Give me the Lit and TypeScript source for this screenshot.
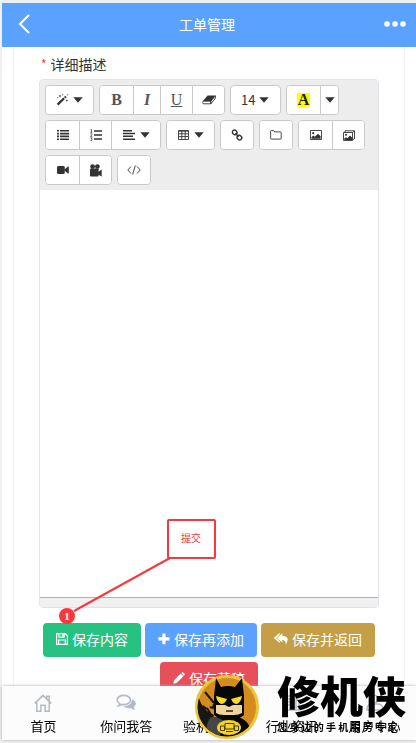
import { LitElement, html, svg, css, type SVGTemplateResult } from "lit";
import { customElement } from "lit/decorators.js";
import { classMap } from "lit/directives/class-map.js";

type Icon = { w: number; h: number; art: SVGTemplateResult };

const icons: Record<string, Icon> = {
  back: { w: 12, h: 20, art: svg`<path d="M11 1 2 10l9 9" fill="none" stroke="currentColor" stroke-width="2"/>` },
  more: { w: 22, h: 6, art: svg`<circle cx="3" cy="3" r="2.8"/><circle cx="11" cy="3" r="2.8"/><circle cx="19" cy="3" r="2.8"/>` },
  caret: { w: 10, h: 6, art: svg`<path d="M.3.3h9.4L5 5.8z"/>` },
  magic: { w: 12, h: 12, art: svg`<path d="M.8 9.8 7.3 3.5l1.6 1.6-6.5 6.4z"/><path d="m8 3 1.3-1.2 1.4 1.4-1.2 1.2z"/><path d="M4 .8v2.4M2.8 2h2.4M6.7 0v1.4M10.8 5.6v2M9.8 6.6h2M1 3.7h1.3M11.4.2v1.2" stroke="currentColor" stroke-width=".7"/>` },
  eraser: { w: 14, h: 10, art: svg`<path d="M5.6.6h8L9 6H1z"/><path d="M1 6.2h7.7v2.6H1.2Q.3 7.6 1 6.2zM8.9 8.8V6.1l4.6-5.3q.7 1.2-.4 2.8z" fill="none" stroke="currentColor" stroke-width=".9"/>` },
  ul: { w: 12, h: 10, art: svg`<path d="M0 0h2v1.6H0zm0 2.8h2v1.6H0zm0 2.8h2v1.6H0zm0 2.8h2V10H0zM3 0h9v1.6H3zm0 2.8h9v1.6H3zm0 2.8h9v1.6H3zm0 2.8h9V10H3z"/>` },
  ol: { w: 12, h: 12, art: svg`<path d="M4 1.2h8v1.5H4zm0 4h8v1.5H4zm0 4h8v1.5H4z"/><path d="M.5.8 1.5.3v3M.3 3.3h2M.4 4.7h1.5v1L.4 7.4h1.9M.4 8.8h1.7L1.2 10q1 0 1 .8t-1.8.7" fill="none" stroke="currentColor" stroke-width=".7"/>` },
  align: { w: 12, h: 10, art: svg`<path d="M0 0h9v1.5H0zm0 2.8h12v1.5H0zm0 2.8h10v1.5H0zm0 2.8h12v1.5H0z"/>` },
  table: { w: 11, h: 10, art: svg`<path d="M.5.5h10v9H.5zM.5 1.2h10M.5 3.8h10M.5 6.6h10M3.8 1v8.5M7.2 1v8.5" fill="none" stroke="currentColor" stroke-width=".9"/>` },
  link: { w: 12, h: 12, art: svg`<g fill="none" stroke="currentColor" stroke-width="1.4"><rect x="1.3" y="1.2" width="4.7" height="4.2" rx="2" transform="rotate(40 3.6 3.4)"/><rect x="6.1" y="6.5" width="4.7" height="4.2" rx="2" transform="rotate(40 8.4 8.6)"/><path d="m4.3 4.3 3.4 3.4"/></g>` },
  folder: { w: 12, h: 10, art: svg`<path d="M.6 8.2V1.4q0-.8.8-.8h2.2q.8 0 .9 1.3h5.8q.9 0 .9.9v5.4q0 .9-.9.9H1.5q-.9 0-.9-.9z" fill="none" stroke="currentColor" stroke-width=".9"/>` },
  picture: { w: 12, h: 10, art: svg`<path d="M.5.5h11v9H.5z" fill="none" stroke="currentColor" stroke-width=".9"/><circle cx="3.2" cy="3.2" r="1.1"/><path d="M1.5 8.8V7l1.8-1.5 1.5 1.2L8 3.8l2.6 2.4v2.6z"/>` },
  pictures: { w: 12, h: 11, art: svg`<path d="M.5 2.5h9v8h-9zM2 2.3V.8h9.5v8L9.8 9.6M9.5 2.6l1.8-1.6" fill="none" stroke="currentColor" stroke-width=".9"/><circle cx="3" cy="4.8" r="1"/><path d="M1.3 10V8.4L3 7.2l1.4 1L7 5.6l2 2V10z"/>` },
  video: { w: 12, h: 8, art: svg`<rect y="0" width="7.8" height="8" rx="1.4"/><path d="M7.5 3.5 11 .6q.8-.4.8.3v6.2q0 .7-.8.3L7.5 4.6z"/>` },
  camera: { w: 12, h: 13, art: svg`<circle cx="2.6" cy="2.6" r="2.4"/><circle cx="7.4" cy="2.6" r="2.4"/><rect y="4.5" width="8.6" height="8" rx=".8"/><path d="M8 8 11.7 5.600v7L8 10.500z"/>` },
  code: { w: 14, h: 10, art: svg`<path d="M4 1.5.8 5 4 8.5M10 1.5 13.2 5 10 8.5M8.3.5 5.7 9.5" fill="none" stroke="currentColor" stroke-width=".9"/>` },
  save: { w: 12, h: 12, art: svg`<path d="M.6.6h8.6l2.2 2.2v8.6H.6zM3 .8v3.4h5.2V.8M2.6 11.2V7h6.8v4.2" fill="none" stroke="currentColor" stroke-width="1.2"/><path d="M6 .8h1.5v2.6H6z"/>` },
  plus: { w: 12, h: 12, art: svg`<path d="M4.3.5h3.2v3.7h4v3.2h-4v3.9H4.3V7.4H.4V4.2h3.9z"/>` },
  reply: { w: 14, h: 12, art: svg`<path d="M8.300 2.800V.2L3 4.900l5.300 4.700V7q3.900 0 3.300 4.800Q17 3.600 8.300 2.800z"/><path d="M5.500.2.1 4.900l5.400 4.700V8.300L1.900 4.900l3.600-3.300z" stroke="currentColor" stroke-width=".5"/>` },
  pencil: { w: 12, h: 12, art: svg`<path d="m8.4.8.9-.5q.6-.2 1.2.4l1 1q.6.7 0 1.3l-.8.8zM7.7 1.5l2.8 2.8L3.6 11l-3.2.7.5-3.3z"/>` },
  home: { w: 18, h: 18, art: svg`<path d="m.8 9.4 8.2-8 8.2 8M2.8 8v9.2h4.1v-6h4.2v6h4.1V8M12.8 4.6V2.2h2.4V7" fill="none" stroke="currentColor" stroke-width="1.5"/>` },
  chat: { w: 20, h: 17, art: svg`<path d="M7.8 1.4c3.7 0 6.7 2 6.7 4.6s-3 4.6-6.7 4.6q-1.1 0-2-.2-1.3 1-3.1 1.2.9-.8 1.1-2Q1.1 8.2 1.1 6c0-2.6 3-4.6 6.7-4.6z" fill="none" stroke="currentColor" stroke-width="1.6"/><path d="M16 5.2c4.7 2 4.9 5.7 1.700 7.800q.3 1.500 1.700 2.700-2.700 0-4.300-1.500-4.900.7-7.600-2Q16 12 16 5.200z"/>` },
  shield: { w: 18, h: 18, art: svg`<path d="M9 1 16 4v5q0 5-7 8-7-3-7-8V4z" fill="none" stroke="currentColor" stroke-width="1.4"/>` },
  news: { w: 18, h: 18, art: svg`<path d="M2 2h11v14H2zM13 6h3v10h-4M5 5h5M5 8h5M5 11h5" fill="none" stroke="currentColor" stroke-width="1.4"/>` },
  user: { w: 18, h: 18, art: svg`<path d="M1 16q0-6 5-6h6q5 0 5 6z" fill="none" stroke="currentColor" stroke-width="1.4"/><circle cx="9" cy="5" r="3.6" fill="none" stroke="currentColor" stroke-width="1.4"/>` },
};

const icon = (name: string) => {
  const i = icons[name];
  return html`<svg class="icon" width=${i.w} height=${i.h} viewBox="0 0 ${i.w} ${i.h}" fill="currentColor" aria-hidden="true">${i.art}</svg>`;
};

@customElement("rich-editor")
class RichEditor extends LitElement {
  static styles = css`
    :host { display: block; position: relative; }
    .label { display: flex; gap: 4px; padding: 7px 2px 5px; font-size: 14px; line-height: 20px; color: #333; }
    .star { color: #e8403c; font-size: 12px; }
    .frame { border: 1px solid #e2e2ec; border-radius: 4px; overflow: hidden; background: #fff; }
    .toolbar { display: flex; flex-wrap: wrap; gap: 5px; padding: 5px; background: #ededed; }
    .group { display: flex; height: 30px; box-sizing: border-box; border: 1px solid #c9c9c9; border-radius: 4px; background: #fff; overflow: hidden; }
    .tool { display: flex; align-items: center; justify-content: center; gap: 5px; width: 32px; padding: 0; border: 0; background: #fff; color: #333; font: 14px "Noto Sans CJK SC", sans-serif; }
    .tool:first-child:not(:last-child) { width: 33px; }
    .tool + .tool { border-left: 1px solid #c9c9c9; }
    .tool.wide { width: 47px; }
    .tool + .tool.wide { width: 49px; }
    .tool.slim { width: 18px; }
    .tool.mid { width: 27px; }
    .letter { font: bold 16px "Liberation Serif", serif; color: #555; }
    .italic { font-style: italic; }
    .under { font-weight: normal; text-decoration: underline; }
    .mark { padding: 0 1px; background: #ff0; color: #222; line-height: 14px; }
    .size { display: grid; grid-template-columns: 49px; align-items: center; color: #333; }
    .size > * { grid-area: 1 / 1; }
    .size .icon { justify-self: end; margin-right: 11px; pointer-events: none; }
    .select { appearance: none; height: 26px; padding: 0 0 0 10px; border: 0; background: none; color: #333; font: 13px "Noto Sans CJK SC", sans-serif; align-self: start; }
    .text { display: block; box-sizing: border-box; width: 100%; height: 407px; padding: 10px; border: 0; outline: 0; resize: none; font: 14px "Noto Sans CJK SC", sans-serif; }
    .status { height: 9px; border-top: 1px solid #b0b0b0; background: #f0f0f0; }
    .note { position: absolute; left: 17px; bottom: -18px; pointer-events: none; }
    .note-text { font: 10px "Noto Sans CJK SC", sans-serif; }
    .note-num { font: bold 11px "Liberation Serif", serif; }
  `;

  private tool(label: string, face: unknown, kind = "") {
    return html`<button type="button" aria-label=${label} class=${classMap({ tool: true, [kind || "plain"]: true })}>${face}</button>`;
  }

  render() {
    const t = this.tool;
    return html`
      <label class="label" for="detail"><span class="star">*</span>详细描述</label>
      <div class="frame">
        <div class="toolbar" role="toolbar" aria-label="格式">
          <div class="group">${t("样式", [icon("magic"), icon("caret")], "wide")}</div>
          <div class="group">
            ${t("粗体", html`<span class="letter">B</span>`)}
            ${t("斜体", html`<span class="letter italic">I</span>`, "mid")}
            ${t("下划线", html`<span class="letter under">U</span>`)}
            ${t("清除格式", icon("eraser"))}
          </div>
          <div class="group size">
            <select class="select" aria-label="字号"><option>12</option><option selected>14</option><option>16</option></select>
            ${icon("caret")}
          </div>
          <div class="group">
            ${t("背景色", html`<span class="letter mark">A</span>`)}
            ${t("更多颜色", icon("caret"), "slim")}
          </div>
          <div class="group">
            ${t("无序列表", icon("ul"))} ${t("有序列表", icon("ol"))}
            ${t("对齐", [icon("align"), icon("caret")], "wide")}
          </div>
          <div class="group">${t("表格", [icon("table"), icon("caret")], "wide")}</div>
          <div class="group">${t("链接", icon("link"))}</div>
          <div class="group">${t("文件", icon("folder"))}</div>
          <div class="group">${t("图片", icon("picture"))} ${t("图库", icon("pictures"))}</div>
          <div class="group">${t("视频", icon("video"))} ${t("上传视频", icon("camera"))}</div>
          <div class="group">${t("源代码", icon("code"))}</div>
        </div>
        <textarea class="text" id="detail"></textarea>
        <div class="status"></div>
      </div>
      <svg class="note" width="162" height="109" viewBox="0 0 162 109" fill="#f9383c">
        <path d="M114 41 18 94" stroke="#f9383c" stroke-width="2" />
        <rect x="112" y="3" width="47" height="38" rx="1" fill="#fff" stroke="#f9383c" stroke-width="2" />
        <text class="note-text" x="135" y="25" text-anchor="middle">提交</text>
        <circle cx="11" cy="99" r="8" />
        <text class="note-num" x="11" y="103" text-anchor="middle" fill="#fff">1</text>
      </svg>
    `;
  }
}

@customElement("brand-mark")
class BrandMark extends LitElement {
  static styles = css`
    :host { display: flex; align-items: flex-end; gap: 17px; color: #000; }
    .badge { display: block; }
    .words { display: flex; flex-direction: column; gap: 4px; padding-bottom: 6px; white-space: nowrap; }
    .name { font: 900 43px/44px "Noto Sans CJK SC", sans-serif; }
    .slogan { font: bold 10px/14px "Noto Sans CJK SC", sans-serif; }
  `;

  render() {
    return html`
      <svg class="badge" width="66" height="66" viewBox="0 0 66 66" aria-hidden="true">
        <defs><clipPath id="disc"><circle cx="33" cy="33" r="29.5" /></clipPath></defs>
        <circle cx="33" cy="33" r="30.5" fill="#d48c20" stroke="#edc53a" stroke-width="3" />
        <g clip-path="url(#disc)">
          <path d="M4 20Q7 36 20 41L14 58Q2 48 3 31z" fill="#171717" />
          <path d="m11 18 9 11M13 34l6 10M13 35l-3-2 1 5 4 2M16 33l3 1 1-4" stroke="#171717" stroke-width="2" fill="none" />
          <path d="M13 66q0-21 14-23h16q14 2 16 23z" fill="#080808" />
          <path d="M17 43h17L24 66H12q-1-17 5-23z" fill="#454545" />
        </g>
        <path d="M20 41V22L22 4l5 9q7-2 14 0l7-9 2 18v19q-15 12-30 0z" fill="#080808" />
        <path d="M22 31h9l4 2 4-2h9v8q-3 2-8 2H30q-5 0-8-2z" fill="#f0d39e" />
        <path d="m22 22 11 3q-2 5-6 5-4-2-5-8zm26 0-11 3q2 5 6 5 4-2 5-8z" fill="#f6dc27" />
        <path d="M32 37h7" stroke="#2b2117" stroke-width="1.5" />
        <ellipse cx="35" cy="53.5" rx="12" ry="7.5" fill="#f2d22b" />
        <path d="M31 49.500h9v5.500h-9zM26.500 52h4v4.500h-4zM40.500 52h4v4.500h-4zM32 57.500h7" fill="none" stroke="#4a3d0a" stroke-width="1" />
      </svg>
      <div class="words">
        <span class="name">修机侠</span>
        <span class="slogan">您 身 边 的 手 机 服 务 专 家</span>
      </div>
    `;
  }
}

@customElement("app-root")
class AppRoot extends LitElement {
  static styles = css`
    :host { display: block; font-family: "Noto Sans CJK SC", sans-serif; }
    .shell { position: relative; display: flex; flex-direction: column; box-sizing: border-box; height: 100vh; padding: 3px 0 3px 2px; background: #f0f0f0; }
    .bar { display: grid; grid-template-columns: 1fr auto 1fr; align-items: center; height: 44px; flex: none; padding: 0 12px 2px 16px; background: #5aa2fd; color: #fff; box-sizing: border-box; }
    .nav { display: flex; align-items: center; padding: 0; border: 0; background: none; color: #fff; }
    .nav.end { justify-self: end; margin-right: -2px; }
    .title { margin: 0 4px 0 -4px; font-size: 14px; line-height: 20px; font-weight: 400; }
    .body { flex: 1; min-height: 0; overflow-y: auto; scrollbar-width: none; background: #fff; }
    .card { margin: 0 11px; padding: 0 25px 16px; border: 1px solid #f3f3f5; border-top: 0; }
    .actions { display: flex; flex-wrap: wrap; justify-content: center; gap: 5px 4px; margin-top: 15px; }
    .action { display: flex; align-items: center; gap: 4px; height: 34px; padding: 0 13px 2px; border: 0; border-radius: 4px; color: #fff; font: 14px "Noto Sans CJK SC", sans-serif; }
    .green { background: #27c281; }
    .blue { background: #5aa2fd; }
    .gold { background: #c49f47; }
    .red { background: #e7505a; }
    .tabs { display: grid; grid-template-columns: repeat(5, 1fr); flex: none; height: 54px; background: #fcfcfc; box-shadow: 0 0 3px #aaa; z-index: 1; }
    .tab { display: flex; flex-direction: column; align-items: center; justify-content: center; gap: 5px; padding-top: 2px; color: #000; font-size: 13px; line-height: 18px; text-decoration: none; }
    .pic { display: flex; align-items: center; height: 18px; color: #b4bac2; }
    .brand { position: absolute; right: 10px; bottom: 3px; z-index: 2; pointer-events: none; }
  `;

  private actions = [
    ["green", "save", "保存内容"],
    ["blue", "plus", "保存再添加"],
    ["gold", "reply", "保存并返回"],
    ["red", "pencil", "保存草稿"],
  ];

  private tabs = [
    ["home", "首页"],
    ["chat", "你问我答"],
    ["shield", "验机报告"],
    ["news", "行业资讯"],
    ["user", "用户中心"],
  ];

  render() {
    return html`
      <div class="shell">
        <header class="bar">
          <button class="nav" type="button" aria-label="返回">${icon("back")}</button>
          <h1 class="title">工单管理</h1>
          <button class="nav end" type="button" aria-label="更多">${icon("more")}</button>
        </header>
        <main class="body">
          <div class="card">
            <rich-editor></rich-editor>
            <div class="actions">
              ${this.actions.map(([tone, pic, text]) => html`<button type="button" class="action ${tone}">${icon(pic)}${text}</button>`)}
            </div>
          </div>
        </main>
        <nav class="tabs">
          ${this.tabs.map(([pic, text]) => html`<a class="tab" href="#${pic}"><span class="pic">${icon(pic)}</span>${text}</a>`)}
        </nav>
        <brand-mark class="brand"></brand-mark>
      </div>
    `;
  }
}
